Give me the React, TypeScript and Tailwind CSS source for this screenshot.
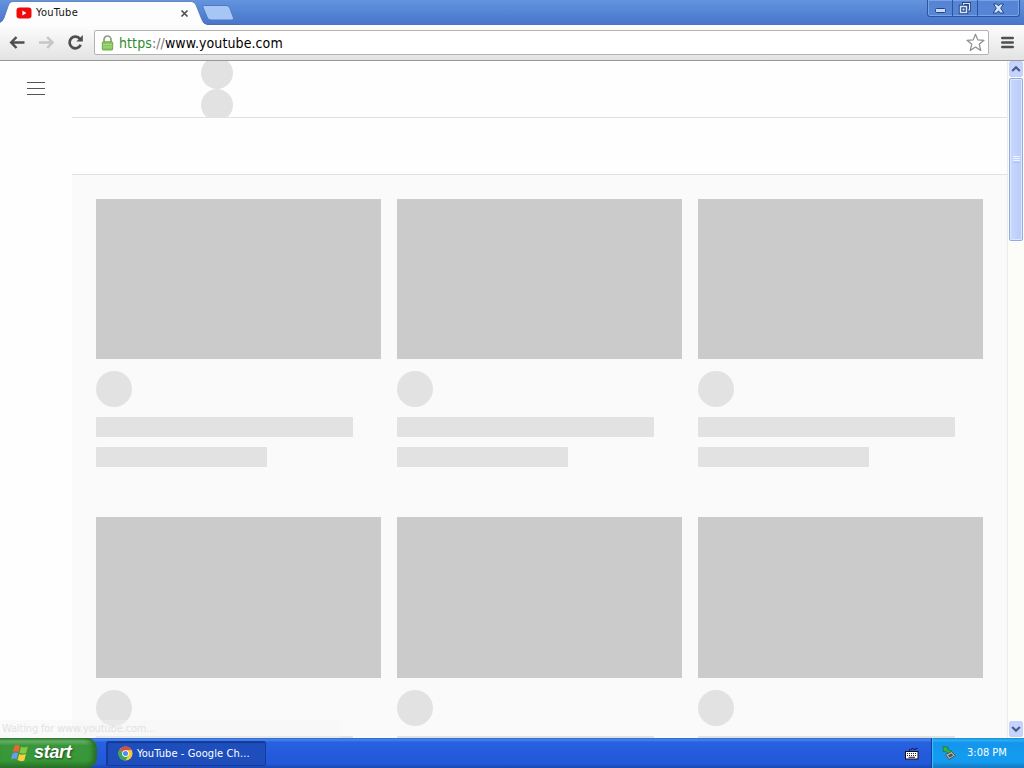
import React from 'react';

const ROWS = [
  { id: 'row-1', thumb: 'h-[160px]' },
  { id: 'row-2', thumb: 'h-[161px]' },
];
const COLUMNS = [1, 2, 3];

function YouTubeIcon() {
  return (
    <svg width="16" height="12" viewBox="0 0 16 12" className="shrink-0">
      <rect x="0.5" y="0.5" width="15" height="11" rx="3" fill="#f00a0a" />
      <path d="M6.4 3.6 10.4 6 6.4 8.4Z" fill="#fff" />
    </svg>
  );
}

function ChromeIcon() {
  return (
    <svg width="15" height="15" viewBox="0 0 16 16" className="shrink-0">
      <circle cx="8" cy="8" r="7.5" fill="#f7ca3e" />
      <path d="M8 8 1.5 4.25A7.5 7.5 0 0 1 14.5 4.25L8 4.5Z" fill="#dd4b3e" />
      <path d="M8 8 1.5 4.25A7.5 7.5 0 0 0 8 15.5L11 9.75Z" fill="#3aa757" />
      <circle cx="8" cy="8" r="3.6" fill="#fff" />
      <circle cx="8" cy="8" r="2.7" fill="#4c8bf5" />
    </svg>
  );
}

function WindowsFlag() {
  return (
    <svg width="18" height="18" viewBox="0 0 18 18" className="shrink-0">
      <path d="M3.4 2Q6 0 8.9 1.9L7.4 8.2Q4.9 6.5 1.9 8.3Z" fill="#ee6533" />
      <path d="M10 2.7Q13 4.400 16.800 2.500L15.200 8.900Q11.500 10.600 8.500 8.800Z" fill="#86c943" />
      <path d="M1.6 9.4Q4.6 7.7 7.1 9.3L5.500 15.500Q3 13.700 0 15.500Z" fill="#6b9cf3" />
      <path d="M8.2 9.9Q11.2 11.6 14.9 10L13.300 16.500Q9.800 18 6.600 16.100Z" fill="#fbd13b" />
    </svg>
  );
}

function TitleBar() {
  return (
    <header className="relative flex h-[25px] shrink-0 items-start justify-between bg-gradient-to-b from-[#6394dd] to-[#4674cb]">
      <svg width="240" height="25" viewBox="0 0 240 25" className="absolute left-0 top-0">
        <path d="M204.500 5.500H226Q229 5.500 230 8.500L233.500 18Q234 20 231.500 20H211Q208.500 20 207.500 18L203 7.500Q202.500 5.500 204.500 5.500Z" fill="#a6c6f5" stroke="#5279bc" strokeWidth="1" />
        <path d="M0 25V22.500Q2.500 21.500 4 18L8.500 5Q9.500 1.500 13 1.500H191Q194.500 1.500 196 5L202 20Q203.500 24 207 24.500V25Z" fill="#fdfdfe" />
        <path d="M0 22.500Q2.500 21.500 4 18L8.500 5Q9.500 1.500 13 1.500H191Q194.500 1.500 196 5L202 20Q203.500 24 207 24.500H240" fill="none" stroke="#486da9" strokeWidth="0.7" />
      </svg>
      <div className="relative flex h-[25px] w-[189px] items-center pl-4 pt-px">
        <YouTubeIcon />
        <span className="ml-[4px] pt-px text-[11px] tracking-[0.3px] text-[#111]">YouTube</span>
        <svg width="9" height="9" viewBox="0 0 9 9" className="ml-auto">
          <path d="M1.500 1.500 7.500 7.500M7.500 1.500 1.500 7.500" stroke="#505050" strokeWidth="1.7" />
        </svg>
      </div>
      <div className="mr-[4px] flex h-[17px] rounded-b-[3px] border border-t-0 border-[#30549c] bg-[#5685d6] shadow-[inset_0_0_0_1px_#7aa2e6]">
        <div className="flex w-[25px] items-center justify-center border-r border-[#30549c]">
          <svg width="13" height="13" viewBox="0 0 13 13">
            <rect x="1.500" y="6.500" width="10" height="4" rx="1" fill="#c4dcff" stroke="#26457f" />
          </svg>
        </div>
        <div className="flex w-[25px] items-center justify-center border-r border-[#30549c]">
          <svg width="14" height="14" viewBox="0 0 14 14" fill="none">
            <path d="M5.500 4V2.500H11.500V9H10" stroke="#26457f" strokeWidth="3" />
            <path d="M5.500 4V2.500H11.500V9H10" stroke="#d4e5ff" strokeWidth="1.200" />
            <rect x="2.500" y="5.500" width="6" height="6" stroke="#26457f" strokeWidth="3.400" />
            <rect x="2.500" y="5.500" width="6" height="6" fill="#26457f" stroke="#d4e5ff" strokeWidth="1.500" />
            <rect x="4.500" y="7.500" width="2" height="2" fill="#d4e5ff" />
          </svg>
        </div>
        <div className="flex w-[41px] items-center justify-center">
          <svg width="13" height="13" viewBox="0 0 13 13">
            <path d="M1.500 2H5L6.500 4 8 2H11.500L8.700 6.200 11.800 11H8L6.500 8.800 5 11H1.200L4.300 6.200Z" fill="#d4e5ff" stroke="#26457f" strokeWidth="1" strokeLinejoin="round" />
          </svg>
        </div>
      </div>
    </header>
  );
}

function Toolbar() {
  return (
    <div className="flex h-[36px] shrink-0 items-center border-b border-[#989898] bg-gradient-to-b from-[#fdfdfe] to-[#e3e3e3] pl-[9px]">
      <svg width="17" height="15" viewBox="0 0 17 15" fill="none" stroke="#4f4f4f" strokeWidth="2.500">
        <path d="M7.500 2 2.200 7.500 7.500 13M2.500 7.500H15.500" />
      </svg>
      <svg width="17" height="15" viewBox="0 0 17 15" fill="none" stroke="#c6c6c6" strokeWidth="2.500" className="ml-[12px]">
        <path d="M9.200 2 14.500 7.500 9.200 13M14 7.500H1" />
      </svg>
      <svg width="17" height="17" viewBox="0 0 17 17" className="ml-[12px]">
        <path d="M13 5A5.800 5.800 0 1 0 13.700 10.800" fill="none" stroke="#4f4f4f" strokeWidth="2.700" />
        <path d="M15.800 1V7.500H9.300Z" fill="#4f4f4f" />
      </svg>
      <div className="ml-[10px] flex h-[25px] w-[895px] items-center rounded-[2px] border border-[#b3b3b3] bg-white pl-[6px] pr-[3px]">
        <svg width="13" height="16" viewBox="0 0 13 16">
          <path d="M3 8V4.500A3.500 3.500 0 0 1 10 4.500V8" fill="none" stroke="#8c9c83" strokeWidth="1.700" />
          <rect x="1.300" y="6.800" width="10.400" height="8.200" rx="1" fill="#87c75c" stroke="#6aaa48" />
          <path d="M2 9.500H11M2 12H11" stroke="#a9dc85" />
        </svg>
        <span className="ml-[5px] whitespace-nowrap pt-px text-[14px] leading-none tracking-[0.1px] text-black">
          <span className="text-[#2f8c2f]">https</span>
          <span className="text-[#777]">://</span>www.youtube.com
        </span>
        <svg width="19" height="19" viewBox="0 0 19 19" className="ml-auto">
          <path d="M9.500 1.200 11.800 6.900 18 7.300 13.200 11.200 14.800 17.500 9.500 14 4.200 17.500 5.800 11.200 1 7.300 7.200 6.900Z" fill="#fff" stroke="#8c8c8c" strokeWidth="1.200" strokeLinejoin="round" />
        </svg>
      </div>
      <svg width="13" height="13" viewBox="0 0 13 13" className="ml-[12px]">
        <path d="M1.300 2H11.700M1.300 6.500H11.700M1.300 11H11.700" stroke="#505050" strokeWidth="2.600" strokeLinecap="round" />
      </svg>
    </div>
  );
}

function VideoSkeleton({ thumb }: { thumb: string }) {
  return (
    <div className="w-[285px]">
      <div className={`bg-[#cbcbcb] ${thumb}`}></div>
      <div className="mt-3 h-9 w-9 rounded-full bg-[#e2e2e2]"></div>
      <div className="mt-[10px] h-5 w-[257px] rounded-[1px] bg-[#e2e2e2]"></div>
      <div className="mt-[10px] h-5 w-[171px] rounded-[1px] bg-[#e2e2e2]"></div>
    </div>
  );
}

function ScrollButton({ down = false }: { down?: boolean }) {
  return (
    <div className="flex h-[16px] w-[14px] shrink-0 items-center justify-center rounded-[2px] border border-[#c3d2f8] bg-[#c5d4fd]">
      <svg width="10" height="8" viewBox="0 0 10 8" className={`shrink-0 ${down ? 'rotate-180' : ''}`}>
        <path d="M1.200 6 5 2.200 8.800 6" fill="none" stroke="#46598c" strokeWidth="2.200" />
      </svg>
    </div>
  );
}

function Scrollbar() {
  return (
    <div className="flex w-[17px] shrink-0 flex-col items-center border-l border-[#eeede5] bg-[#fcfcf9] pb-px">
      <ScrollButton />
      <div className="mt-px flex h-[163px] w-[14px] items-center justify-center rounded-[2px] border border-[#93acdf] bg-gradient-to-r from-[#cad8ff] to-[#b9cbfa] shadow-[inset_0_0_0_1px_#dce6ff]">
        <div className="flex flex-col gap-px">
          <div className="h-px w-[7px] bg-[#eef4fe]"></div>
          <div className="h-px w-[7px] bg-[#eef4fe]"></div>
          <div className="h-px w-[7px] bg-[#eef4fe]"></div>
          <div className="h-px w-[7px] bg-[#a6c0f8]"></div>
        </div>
      </div>
      <div className="flex-1"></div>
      <ScrollButton down />
    </div>
  );
}

function Page() {
  return (
    <div className="relative flex min-h-0 flex-1 overflow-hidden bg-white">
      {/* Mini guide */}
      <aside className="w-[72px] shrink-0 bg-[#fefefe] pl-[27px] pt-[21px]">
        <svg width="18" height="14" viewBox="0 0 18 14" shapeRendering="crispEdges">
          <path d="M0 .5H18M0 6.500H18M0 12.500H18" stroke="#555" />
        </svg>
      </aside>

      <main className="flex min-w-0 flex-1 flex-col bg-[#fafafa]">
        <div className="flex h-[57px] shrink-0 flex-col overflow-hidden border-b border-[#e1e1e1] bg-[#fefefe] pl-[129px]">
          <div className="-mt-1 h-8 w-8 shrink-0 rounded-full bg-[#e2e2e2]"></div>
          <div className="h-8 w-8 shrink-0 rounded-full bg-[#e2e2e2]"></div>
        </div>
        <div className="h-[57px] shrink-0 border-b border-[#e1e1e1] bg-[#fefefe]"></div>

        <div className="flex flex-col gap-[50px] pl-6 pt-6">
          {ROWS.map((row) => (
            <div key={row.id} className="flex gap-4">
              {COLUMNS.map((column) => (
                <VideoSkeleton key={column} thumb={row.thumb} />
              ))}
            </div>
          ))}
        </div>
      </main>

      <Scrollbar />

      {/* Fading status bubble */}
      <div className="absolute bottom-0 left-0 flex h-[18px] w-[340px] items-center rounded-tr-[3px] bg-[#f5f5f5]/40 pl-[2px] pt-px text-[11px] tracking-[-0.15px] text-[#e2e2e2]">
        Waiting for www.youtube.com...
      </div>
    </div>
  );
}

function Taskbar() {
  return (
    <footer className="flex h-[30px] shrink-0 bg-[linear-gradient(180deg,#3165c9_0%,#4386f0_6%,#2862df_14%,#245bdc_50%,#2259d9_85%,#1b47b0_100%)] text-[11px] text-white">
      <button className="flex w-[97px] items-center rounded-r-[10px] bg-[linear-gradient(180deg,#388238_0%,#68b568_10%,#3b963b_25%,#379837_75%,#287328_100%)] pl-[11px] shadow-[inset_-4px_0_5px_#286b28]">
        <WindowsFlag />
        <span className="ml-[5px] pb-[2px] font-['Liberation_Sans'] text-[18px] font-bold italic leading-none tracking-[-0.3px] [text-shadow:1px_1px_2px_#1c4a1c]">start</span>
      </button>
      <button className="ml-[9px] mt-[3px] flex h-[25px] w-[160px] items-center rounded-[2px] border border-[#173b9c] bg-[#1e4ebc] pl-[11px] shadow-[inset_1px_1px_1px_#153a93]">
        <ChromeIcon />
        <span className="ml-[4px] whitespace-nowrap pt-[2px] tracking-[0.1px]">YouTube - Google Ch...</span>
      </button>
      <div className="ml-auto flex w-[26px] items-center pt-[2px]">
        <svg width="14" height="14" viewBox="0 0 14 14">
          <path d="M4.500 4V2.500H6.500V1.500H8.500V2.500H10.500V1.500H12.500" fill="none" stroke="#101c42" strokeDasharray="2 .6" />
          <rect x="0.500" y="4.500" width="12.500" height="7.500" fill="#fff" stroke="#111" />
          <path d="M2 6.500H12M2 8.500H12" stroke="#222" strokeDasharray="1 1" />
          <path d="M3.500 10.300H10" stroke="#222" />
        </svg>
      </div>
      <div className="flex w-[93px] items-center border-l border-[#123f9c] bg-[linear-gradient(180deg,#1582d0_0%,#2bb1f5_7%,#1594ec_16%,#129bef_50%,#149bef_80%,#1273ba_100%)] pl-[9px] shadow-[inset_1px_0_1px_#42c0ff]">
        <svg width="16" height="16" viewBox="0 0 16 16">
          <path d="M4.500 9.500 10.500 6.500 14.500 10.500 8 14.500Z" fill="#aeb4b6" stroke="#4d575b" />
          <path d="M7 10.500 10.500 8.500 12.200 10.300 8.700 12.400Z" fill="#465257" />
          <path d="M2 1.500 7.500 2.500 6.500 4.500 10.500 6 7.500 8.500 4.500 6 2.500 7Z" fill="#35b83d" stroke="#176a23" strokeWidth=".6" />
        </svg>
        <span className="ml-[10px] whitespace-nowrap pt-px tracking-[0px]">3:08 PM</span>
      </div>
    </footer>
  );
}

export default function App() {
  return (
    <div className="flex h-[768px] w-[1024px] flex-col overflow-hidden bg-white font-['DejaVu_Sans_Condensed','DejaVu_Sans',sans-serif]">
      <TitleBar />
      <Toolbar />
      <Page />
      <Taskbar />
    </div>
  );
}
